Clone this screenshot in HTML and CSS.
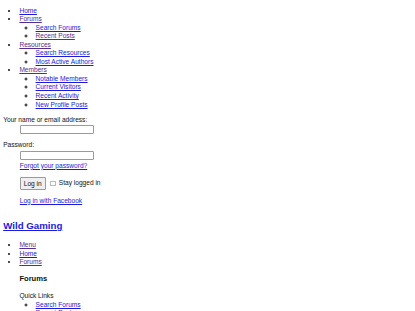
FILE: index.html
```html
<!DOCTYPE html>
<html lang="en">

<head>
	<meta charset="UTF-8">
	<meta name="viewport" content="width=device-width, initial-scale=1.0">
	<title>Wild Gaming</title>
	<link rel="stylesheet" href="styles.css">
</head>

<body>
	<ul class="nav">
		<li><a href="#home">Home</a></li>
		<li><a class="seen" href="#forums">Forums</a>
			<ul>
				<li><a href="#search-forums">Search Forums</a></li>
				<li><a class="seen" href="#recent-posts">Recent Posts</a></li>
			</ul>
		</li>
		<li><a class="seen" href="#resources">Resources</a>
			<ul>
				<li><a href="#search-resources">Search Resources</a></li>
				<li><a href="#authors">Most Active Authors</a></li>
			</ul>
		</li>
		<li><a class="seen" href="#members">Members</a>
			<ul>
				<li><a href="#notable">Notable Members</a></li>
				<li><a href="#online">Current Visitors</a></li>
				<li><a href="#activity">Recent Activity</a></li>
				<li><a href="#profile-posts">New Profile Posts</a></li>
			</ul>
		</li>
	</ul>

	<form class="login">
		<dl>
			<dt><label for="login">Your name or email address:</label></dt>
			<dd><input type="text" id="login"></dd>
		</dl>
		<dl class="pass">
			<dt><label for="password">Password:</label></dt>
			<dd><input type="password" id="password">
				<div class="lost"><a href="#lost">Forgot your password?</a></div>
			</dd>
		</dl>
		<div class="submit">
			<button type="button">Log in</button>
			<label class="remember"><input type="checkbox"> Stay logged in</label>
		</div>
		<div class="facebook"><a href="#facebook">Log in with Facebook</a></div>
	</form>

	<h2 class="logo"><a href="#home">Wild Gaming</a></h2>

	<ul class="nav tabs">
		<li><a class="seen" href="#menu">Menu</a></li>
		<li><a href="#home">Home</a></li>
		<li><a class="seen" href="#forums">Forums</a></li>
	</ul>

	<div class="section">
		<h3>Forums</h3>
		<div class="quick">Quick Links</div>
		<ul class="links">
			<li><a href="#search-forums">Search Forums</a></li>
			<li><a class="seen" href="#recent-posts">Recent Posts</a></li>
		</ul>
	</div>
</body>

</html>
```

FILE: styles.css
```css
html {
	background: #fff;
}

body {
	margin: 0 3.2px;
	font-family: "Liberation Sans", Arial, sans-serif;
	font-size: 6.6px;
	line-height: 8.55px;
	color: #111;
}

a {
	color: #1a1ae0;
}

a.seen {
	color: #5a2a8e;
}

ul {
	margin: 6.5px 0;
	padding-left: 16.2px;
}

ul ul {
	margin: 0;
	list-style: circle;
}

dl {
	margin: 6.5px 0;
}

dl.pass {
	margin-top: 7px;
}

dt {
	height: 9.5px;
}

dd {
	margin-left: 16.6px;
}

input[type="text"],
input[type="password"] {
	display: block;
	width: 74px;
	height: 9px;
	box-sizing: border-box;
	margin: 0;
	padding: 0 1px;
	border: 1px solid #9a9a9a;
	border-radius: 1px;
	font-size: 6.5px;
}

.lost {
	margin-top: 2px;
}

.submit {
	display: flex;
	align-items: center;
	margin: 6px 0 0 16.6px;
}

.submit button {
	height: 13.5px;
	padding: 0 3px;
	margin: 0;
	font-family: "Liberation Sans", Arial, sans-serif;
	font-size: 6.6px;
	background: #efefef;
	border: 1px solid #9a9a9a;
	border-radius: 1px;
	color: #111;
}

.remember {
	display: flex;
	align-items: center;
	gap: 3px;
	margin-left: 4.5px;
}

.remember input {
	appearance: none;
	width: 5.5px;
	height: 5.5px;
	margin: 0;
	border: 1px solid #bbb;
	border-radius: 0;
	background: #fff;
}

.facebook {
	margin: 6.5px 0 0 16.6px;
}

.logo {
	font-size: 9.7px;
	line-height: 12px;
	margin: 15px 0 9px;
}

.section {
	margin-left: 16.2px;
}

.section h3 {
	font-size: 7.6px;
	line-height: 10px;
	margin: 7.6px 0;
}

.links {
	margin: 0;
	list-style: circle;
}
```
